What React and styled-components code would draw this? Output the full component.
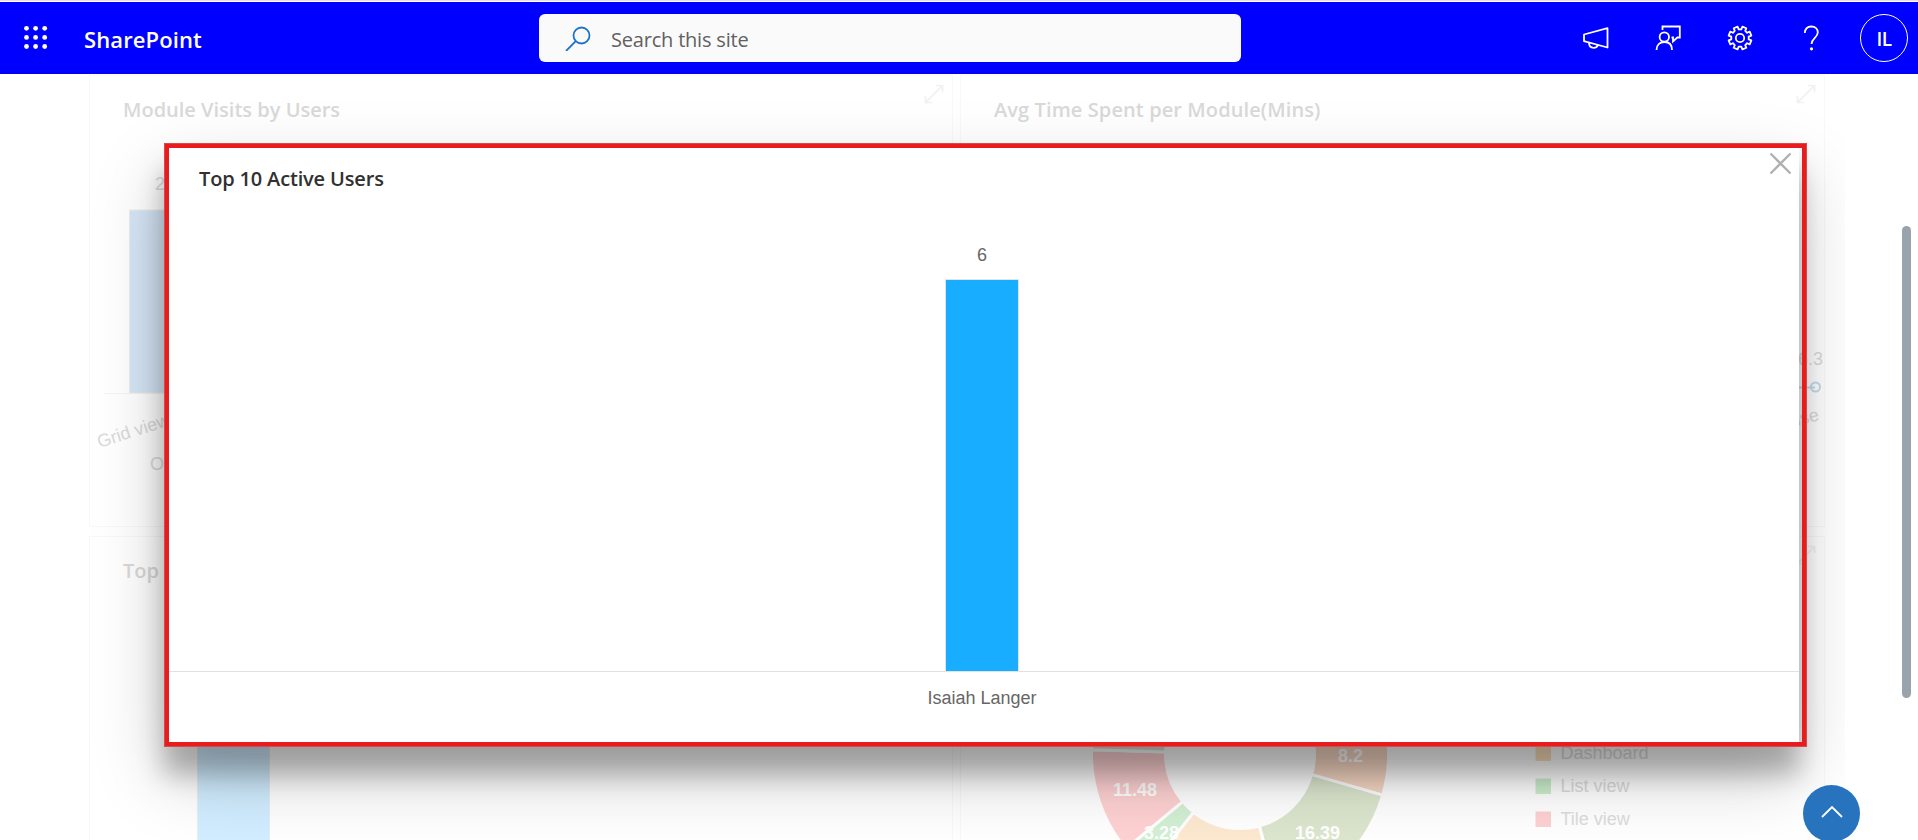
import React from 'react';
import styled, { createGlobalStyle } from 'styled-components';

const Global = createGlobalStyle`
  * { box-sizing: border-box; }
  html, body { margin: 0; padding: 0; overflow: hidden; background: #fff; }
  body { font-family: 'Open Sans', 'Noto Sans', sans-serif; }
`;

const Page = styled.div`
  position: relative;
  display: flex;
  flex-direction: column;
  width: 1918px;
  height: 840px;
  overflow: hidden;
  background: #fff;
`;

const SuiteBar = styled.header`
  display: grid;
  grid-template-columns: 539px 702px 1fr;
  align-items: center;
  flex: none;
  height: 74px;
  padding-top: 2px;
  background: linear-gradient(#e3dcf3 0 1px, #fff 1px 2px, #0000ff 2px);
`;

const Brand = styled.div`
  display: flex;
  align-items: center;
  gap: 36px;
  padding-left: 24px;
  color: #fff;
  font-size: 22px;
  font-weight: 600;
  letter-spacing: 0.1px;
`;

const BrandName = styled.span`
  padding-top: 1px;
`;

const SearchBox = styled.div`
  display: flex;
  align-items: center;
  gap: 20px;
  height: 48px;
  padding-left: 26px;
  border-radius: 6px;
  background: #fafafa;
`;

const Placeholder = styled.span`
  padding-top: 2px;
  color: #616161;
  font-size: 20px;
  letter-spacing: -0.2px;
`;

const Actions = styled.nav`
  display: flex;
  justify-content: flex-end;
  align-items: center;
  gap: 46px;
  padding-right: 10px;
`;

const Avatar = styled.div`
  display: flex;
  align-items: center;
  justify-content: center;
  width: 48px;
  height: 48px;
  margin-left: -11px;
  padding-top: 2px;
  border: 1px solid #fff;
  border-radius: 50%;
  color: #fff;
  font-size: 19px;
  font-weight: 600;
  letter-spacing: -0.5px;
`;

const Dashboard = styled.main`
  position: relative;
  flex: 1;
  width: 1768px;
  margin-left: 77px;
  padding: 1px 20px 0 12px;
  overflow: hidden;
  display: grid;
  grid-template-columns: 864px 865px;
  grid-template-rows: 452px 452px;
  gap: 9px 7px;
`;

const Card = styled.section`
  display: flex;
  flex-direction: column;
  border: 1px solid #f8f8f8;
  background: #fff;
`;

const CardHead = styled.div`
  display: flex;
  justify-content: space-between;
  align-items: flex-start;
  flex: none;
  height: 60px;
  padding: 8px 8px 0 33px;
`;

const Title = styled.h2`
  margin: ${(p) => p.$top || 12}px 0 0;
  font-size: 20px;
  line-height: 28px;
  font-weight: ${(p) => (p.$muted ? 600 : 550)};
  letter-spacing: ${(p) => p.$track || 0}px;
  white-space: nowrap;
  color: ${(p) => (p.$muted ? '#d9d9d9' : '#323130')};
`;

const Chart = styled.svg`
  display: block;
  flex: none;
  font-family: 'Liberation Sans', Arial, sans-serif;
  font-size: 18px;
`;

const Icon = styled.svg`
  display: block;
  flex: none;
  fill: none;
  stroke: ${(p) => p.$color || '#fff'};
  stroke-width: ${(p) => p.$weight || 1.8};
`;

const Shade = styled.div`
  position: absolute;
  left: 87px;
  top: 69px;
  width: 1635px;
  height: 603px;
  box-shadow:
    0 28px 24px 0 rgba(0, 0, 0, 0.26),
    0 31px 66px 0 rgba(0, 0, 0, 0.21);
`;

const Modal = styled.div`
  position: absolute;
  left: 164px;
  top: 143px;
  width: 1635px;
  height: 603px;
  background: #fff;
`;

const ModalHead = styled.div`
  display: flex;
  justify-content: space-between;
  align-items: flex-start;
  height: 57px;
  padding: 9px 6px 0 35px;
`;

const Highlight = styled.div`
  position: absolute;
  left: 164px;
  top: 143px;
  width: 1643px;
  height: 604px;
  border: 5px solid #e81c1c;
  outline: 1px solid rgba(200, 120, 120, 0.5);
  outline-offset: -1px;
`;

const ScrollThumb = styled.div`
  position: absolute;
  left: 1902px;
  top: 226px;
  width: 9px;
  height: 472px;
  border-radius: 5px;
  background: #98a3ad;
`;

const ToTop = styled.button`
  position: absolute;
  left: 1803px;
  top: 785px;
  display: flex;
  align-items: center;
  justify-content: center;
  width: 57px;
  height: 57px;
  padding: 0 0 3px;
  border: 0;
  border-radius: 50%;
  background: #2873bd;
`;

const Expand = () => (
  <Icon width="20" height="20" viewBox="0 0 20 20" $color="#f1f1f1" $weight={1.7}>
    <path d="M1.8 18.2L18.2 1.8M12 1.5h6.500v6.500M1.5 12v6.500h6.500" />
  </Icon>
);

const CX = 279;
const CY = 157;
const OUTER = 148.5;
const INNER = 74.5;
const point = (r, deg) => {
  const a = (deg * Math.PI) / 180;
  return `${(CX + r * Math.cos(a)).toFixed(2)} ${(CY + r * Math.sin(a)).toFixed(2)}`;
};
const slicePath = (a, b) =>
  `M${point(OUTER, a)}A${OUTER} ${OUTER} 0 0 1 ${point(OUTER, b)}L${point(INNER, b)}A${INNER} ${INNER} 0 0 0 ${point(INNER, a)}Z`;

const slices = [
  { from: -13.5, to: 16.1, color: '#f8d8c4' },
  { from: 16.1, to: 75, color: '#dce6ce' },
  { from: 75, to: 128.5, color: '#fde9d0' },
  { from: 128.5, to: 140.3, color: '#d2f0d3' },
  { from: 140.3, to: 181.6, color: '#fed1d2' },
  { from: 181.6, to: 215, color: '#cfe5d5' },
];

const sliceLabels = [
  { x: 389.5, y: 164.5, text: '8.2' },
  { x: 356.5, y: 241.5, text: '16.39' },
  { x: 200.5, y: 241.5, text: '3.28' },
  { x: 174, y: 198.8, text: '11.48' },
];

const legend = [
  { y: 148.5, text: 'Dashboard', color: '#fddfbb' },
  { y: 181.5, text: 'List view', color: '#cdeecd' },
  { y: 214.5, text: 'Tile view', color: '#fed1d2' },
];

const Megaphone = () => (
  <Icon width="26" height="24" viewBox="0 0 26 24" strokeLinejoin="round">
    <path d="M1 8.5L24.5 2.2v19.300L1 15.2zM6 16.8c0 3 1.800 5 4.600 5 2.200 0 3.900-1.300 4.200-3" />
  </Icon>
);

const Feedback = () => (
  <Icon width="26" height="26" viewBox="0 0 26 26">
    <circle cx="9.3" cy="12" r="4.7" />
    <path d="M1.5 25c0-5 3.300-8 8-8s7.500 3 7.500 8M7.5 5V1.500h17.300v11h-2.500l-4.300 4v-4h-1.500" />
  </Icon>
);

const gear = (() => {
  const pts = [];
  for (let i = 0; i < 8; i += 1) {
    const c = i * 45 + 22.5;
    [[8.8, -14], [11.6, -10.5], [11.6, 10.5], [8.8, 14]].forEach(([r, d]) => {
      const a = ((c + d) * Math.PI) / 180;
      pts.push(`${(13 + r * Math.cos(a)).toFixed(2)} ${(13 + r * Math.sin(a)).toFixed(2)}`);
    });
  }
  return `M${pts.join('L')}Z`;
})();

const Settings = () => (
  <Icon width="26" height="26" viewBox="0 0 26 26" strokeLinejoin="round">
    <path d={gear} />
    <circle cx="13" cy="13" r="4.2" />
  </Icon>
);

const Help = () => (
  <Icon width="26" height="26" viewBox="0 0 26 26">
    <path d="M5.800 8c0-4 2.600-6.500 6.500-6.500s6.500 2.400 6.500 6c0 5-6.300 5.700-6.300 11.500" />
    <circle cx="12.500" cy="23.800" r="0.700" fill="#fff" />
  </Icon>
);

export default function App() {
  return (
    <Page>
      <Global />
      <SuiteBar>
        <Brand>
          <svg width="24" height="26" viewBox="0 0 24 26" fill="#fff">
            {[3.3, 12.4, 21.5].map((y) =>
              [2.5, 11.6, 20.7].map((x) => <circle key={`${x}-${y}`} cx={x} cy={y} r="2.4" />)
            )}
          </svg>
          <BrandName>SharePoint</BrandName>
        </Brand>
        <SearchBox>
          <Icon width="26" height="26" viewBox="0 0 26 26" $color="#1b74c9">
            <circle cx="16.5" cy="10.5" r="8" />
            <path d="M10.800 16.200L1 26" />
          </Icon>
          <Placeholder>Search this site</Placeholder>
        </SearchBox>
        <Actions>
          <Megaphone />
          <Feedback />
          <Settings />
          <Help />
          <Avatar>IL</Avatar>
        </Actions>
      </SuiteBar>

      <Dashboard>
        <Card>
          <CardHead>
            <Title $muted>Module Visits by Users</Title>
            <Expand />
          </CardHead>
          <Chart width="860" height="390" fill="#dadada">
            <path d="M14 257.500H846" stroke="#f4f4f4" />
            <rect x="39.5" y="74" width="72" height="183" fill="#d6e6f6" stroke="#ededed" />
            <text x="65" y="54">23</text>
            <text transform="translate(9.5 312) rotate(-18)">Grid view</text>
            <text x="60" y="334">Others</text>
          </Chart>
        </Card>
        <Card>
          <CardHead>
            <Title $muted $track={0.1}>Avg Time Spent per Module(Mins)</Title>
            <Expand />
          </CardHead>
          <Chart width="863" height="390" fill="#dadada">
            <text x="862" y="229" textAnchor="end">16.3</text>
            <path d="M790 251.500H854" stroke="#c3dbec" strokeWidth="2" />
            <circle cx="854.5" cy="251" r="4.5" fill="none" stroke="#c3dbec" strokeWidth="2" />
            <text transform="translate(859 284) rotate(-14)" textAnchor="end">Expense</text>
          </Chart>
        </Card>
        <Card>
          <CardHead>
            <Title $muted>Top 10 Active Users</Title>
            <Expand />
          </CardHead>
          <Chart width="860" height="390">
            <rect x="107.5" y="50" width="72" height="340" fill="#d1edff" stroke="#e6eef3" />
          </Chart>
        </Card>
        <Card>
          <CardHead>
            <Title $muted>Time Spent by Module</Title>
            <Expand />
          </CardHead>
          <Chart width="863" height="390" fill="#dcdcdc">
            {slices.map((s) => (
              <path key={s.from} d={slicePath(s.from, s.to)} fill={s.color} stroke="#fff" strokeWidth="3" />
            ))}
            {sliceLabels.map((l) => (
              <text key={l.text} x={l.x} y={l.y} textAnchor="middle" fontWeight="700" fill="#fff">
                {l.text}
              </text>
            ))}
            {legend.map((l) => (
              <g key={l.text}>
                <rect x="574.5" y={l.y} width="15.5" height="15.5" fill={l.color} />
                <text x="599.5" y={l.y + 13.2}>{l.text}</text>
              </g>
            ))}
          </Chart>
        </Card>
        <Shade />
      </Dashboard>

      <Modal>
        <ModalHead>
          <Title $top={13} $track={-0.16}>Top 10 Active Users</Title>
          <Icon width="24" height="24" viewBox="0 0 24 24" $color="#b0b0b0" $weight={2.3}>
            <path d="M1.500 1.500L21.500 21.500M21.500 1.500L1.500 21.500" />
          </Icon>
        </ModalHead>
        <Chart width="1635" height="540" fill="#666">
          <rect x="781.5" y="79.5" width="73" height="392" fill="#19adff" stroke="#e3e3e3" />
          <path d="M0 471.500H1635" stroke="#e2e2e2" />
          <text x="818" y="61" textAnchor="middle">6</text>
          <text x="818" y="504" textAnchor="middle">Isaiah Langer</text>
        </Chart>
      </Modal>
      <Highlight />
      <ScrollThumb />
      <ToTop aria-label="Back to top">
        <Icon width="24" height="14" viewBox="0 0 24 14">
          <path d="M2 12L12 2L22 12" />
        </Icon>
      </ToTop>
    </Page>
  );
}
